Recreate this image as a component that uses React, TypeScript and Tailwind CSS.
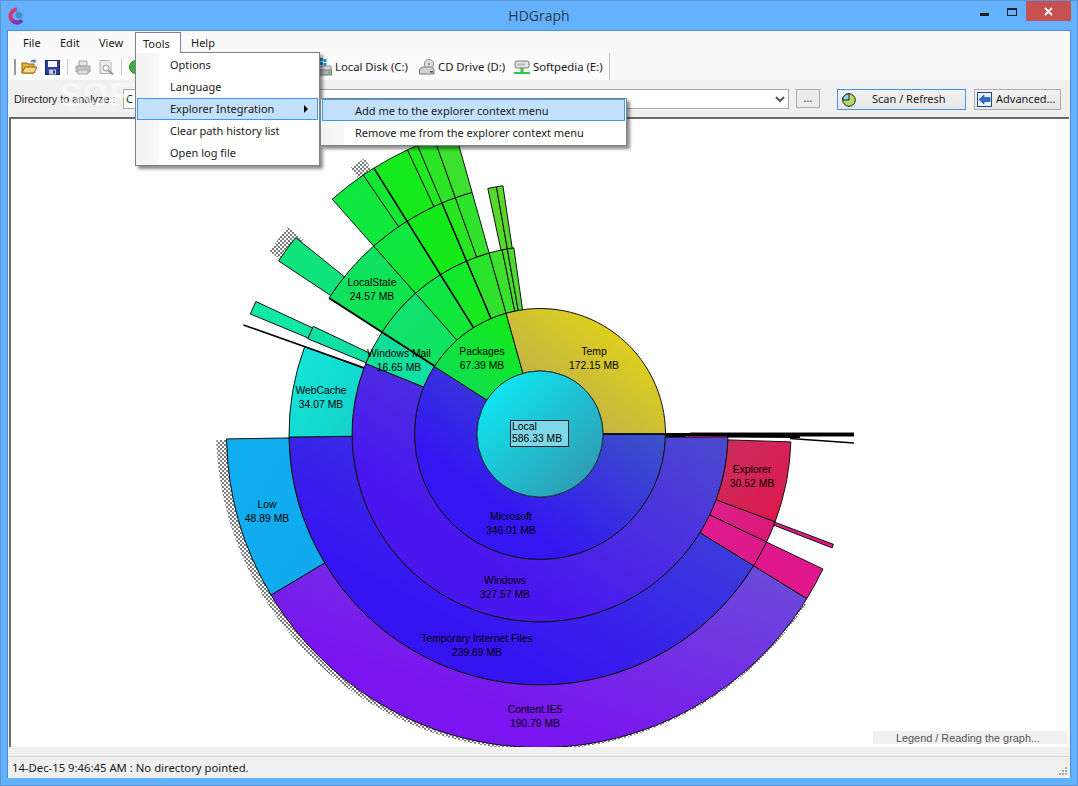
import React from "react";

const CX = 540;
const CY = 434;
const R = [63, 125.5, 188, 251, 313.5];

const pt = (r: number, a: number) => {
  const t = (a * Math.PI) / 180;
  return `${(CX + r * Math.cos(t)).toFixed(2)} ${(CY + r * Math.sin(t)).toFixed(2)}`;
};

const sector = (r0: number, r1: number, a0: number, a1: number) => {
  const big = a1 - a0 > 180 ? 1 : 0;
  return `M${pt(r0, a0)}L${pt(r1, a0)}A${r1} ${r1} 0 ${big} 1 ${pt(r1, a1)}L${pt(r0, a1)}A${r0} ${r0} 0 ${big} 0 ${pt(r0, a0)}Z`;
};

// ring index, start, end, colour a, colour b, rising = gradient runs bottom left to top right
type Seg = [number, number, number, string, string, boolean?];

const SEGS: Seg[] = [
  // microsoft / packages / temp
  [0, 0, 212.6, "#3316f2", "#3f68b8", true],
  [0, 212.6, 254.3, "#10dc60", "#12ea10", true],
  [0, 254.3, 360, "#b0a560", "#eedd06", true],
  // windows and co
  [1, 0, 202, "#4a16f0", "#4c58c6", true],
  [1, 202, 212.8, "#10de98", "#10e0a8"],
  [1, 212.8, 228.5, "#10e078", "#10e458"],
  [1, 228.5, 238, "#10e450", "#10e830"],
  [1, 238, 247, "#10e830", "#18ea18"],
  [1, 247, 254.3, "#20e828", "#38dc30"],
  [1, 254.3, 258.4, "#3ee030", "#3ee030"],
  [1, 258.4, 260, "#48dc30", "#48dc30"],
  [1, 260, 262, "#50da30", "#50da30"],
  // third ring
  [2, 1.8, 20.5, "#c8305e", "#e0154a"],
  [2, 20.5, 25.5, "#dc2090", "#d81a70"],
  [2, 25.5, 31.7, "#e01a90", "#dc1a88"],
  [2, 31.7, 179.3, "#3614f2", "#3e50d0", true],
  [2, 179.3, 200.4, "#14e8dc", "#14d0c8"],
  [2, 202.3, 205.4, "#10e0a8", "#10e0a0"],
  [2, 212.8, 228.5, "#10e070", "#10e440"],
  [2, 228.5, 238, "#10e44a", "#10ea28"],
  [2, 238, 247, "#12ea1c", "#16ea16"],
  [2, 247, 250.3, "#20e820", "#2ae620"],
  [2, 250.3, 254.3, "#2ae628", "#34e030"],
  [2, 258, 260, "#55d82a", "#55d82a"],
  [2, 260, 261.5, "#5ad62a", "#5ad62a"],
  // outer ring
  [3, 20.6, 21.3, "#dc1c80", "#dc1c80"],
  [3, 25.5, 31.7, "#e0188c", "#e0188c"],
  [3, 31.7, 149.1, "#7a14f0", "#6a4ed8", true],
  [3, 149.1, 179.1, "#10aef0", "#10aaee"],
  [3, 202.5, 205, "#10e8a4", "#10e8a4"],
  [3, 213.5, 218.8, "#10e47c", "#10e47c"],
  [3, 228.5, 235.7, "#10e844", "#12e838"],
  [3, 235.7, 238, "#12e834", "#12e834"],
  [3, 238, 245, "#14ea1e", "#16ea18"],
  [3, 245, 247, "#1eea1e", "#1eea1e"],
  [3, 247, 250.3, "#2ae626", "#2ae626"],
  [3, 250.3, 254.3, "#3ce02e", "#3ce02e"],
];

const SHADOWS: [number, number][] = [
  [33, 178],
  [213.5, 219],
  [234.5, 237.5],
];

const LABELS: [string, string, number, number][] = [
  ["Temp", "172.15 MB", 594, 355],
  ["Packages", "67.39 MB", 482, 355],
  ["Windows Mail", "16.65 MB", 399, 357],
  ["LocalState", "24.57 MB", 372, 286],
  ["WebCache", "34.07 MB", 321, 394],
  ["Low", "48.89 MB", 267, 508],
  ["Microsoft", "346.01 MB", 511, 520],
  ["Windows", "327.57 MB", 505, 584],
  ["Temporary Internet Files", "239.69 MB", 477, 642],
  ["Content.IE5", "190.79 MB", 535, 713],
  ["Explorer", "30.52 MB", 752, 473],
];

function Graph() {
  return (
    <svg viewBox="11 119 1058 628" className="block w-[1058px] h-[628px] font-['Liberation_Sans',sans-serif]">
      <defs>
        <pattern id="dither" width="4" height="4" patternUnits="userSpaceOnUse">
          <rect width="2" height="2" fill="#7c7c7c" />
          <rect x="2" y="2" width="2" height="2" fill="#7c7c7c" />
        </pattern>
        <linearGradient id="local" x1="0" y1="0" x2="1" y2="1">
          <stop offset="0" stopColor="#0af2fc" />
          <stop offset="1" stopColor="#3490a8" />
        </linearGradient>
        {SEGS.map((s, i) => (
          <linearGradient key={i} id={`g${i}`} x1="0" y1={s[5] ? 1 : 0} x2="1" y2={s[5] ? 0 : 1}>
            <stop offset="0" stopColor={s[3]} />
            {/* the big blue sectors keep their full colour for a while */}
            {s[2] - s[1] > 110 && <stop offset="0.3" stopColor={s[3]} />}
            <stop offset="1" stopColor={s[4]} />
          </linearGradient>
        ))}
      </defs>

      {SHADOWS.map(([a, b], i) => {
        const t0 = (a * Math.PI) / 180;
        const t1 = (b * Math.PI) / 180;
        const p = (r: number, t: number) => `${537 + r * Math.cos(t)} ${429 + r * Math.sin(t)}`;
        return (
          <path
            key={i}
            d={`M${p(300, t0)}L${p(321, t0)}A321 321 0 0 1 ${p(321, t1)}L${p(300, t1)}Z`}
            fill="url(#dither)"
          />
        );
      })}

      {SEGS.map((s, i) => (
        <path key={i} d={sector(R[s[0]], R[s[0] + 1], s[1], s[2])} fill={`url(#g${i})`} stroke="#111" strokeWidth="1" />
      ))}

      <path d={`M${pt(125.5, 212.8)}L${pt(251, 212.8)}`} stroke="#000" strokeWidth="2" />
      <path d={`M${pt(125.5, 238)}L${pt(313.5, 238)}`} stroke="#000" strokeWidth="1.6" />
      <path d={`M${pt(125.5, 247)}L${pt(251, 247)}`} stroke="#000" strokeWidth="1.4" />
      <path d={`M${pt(188, 200.6)}L${pt(316, 200.2)}`} stroke="#000" strokeWidth="1.6" />
      <path d="M603 434H665" stroke="#000" strokeWidth="1.5" />

      {/* tiny folders on the right, they collapse into a black band */}
      <path d="M690 432H854V433.5H690Z" fill="#8a8a8a" />
      <path d="M665 433H854V436.5H800V438L727 437.5L665 437.5Z" fill="#000" />
      <path d="M790 438.5L854 443" stroke="#000" strokeWidth="1.4" />
      <path d="M685 436.5L727 437" stroke="#a02050" strokeWidth="1" />

      <circle cx={CX} cy={CY} r={R[0]} fill="url(#local)" stroke="#1a3a44" strokeWidth="1" />
      <rect x="510.5" y="420.5" width="58" height="26" fill="#7fd8e8" stroke="#123" strokeWidth="1" />
      <g fontSize="11.5" fill="#000" transform="translate(512 0) scale(0.9 1)">
        <text x="0" y="430">Local</text>
        <text x="0" y="442">586.33 MB</text>
      </g>

      {LABELS.map(([a, b, x, y]) => (
        <g key={a} fontSize="11.5" fill="#000" textAnchor="middle" transform={`translate(${x} ${y}) scale(0.9 1)`}>
          <text>{a}</text>
          <text y="14">{b}</text>
        </g>
      ))}
    </svg>
  );
}

const Logo = () => (
  <svg width="18" height="18" viewBox="0 0 18 18">
    <circle cx="9" cy="9" r="6.5" fill="none" stroke="#d8327a" strokeWidth="4" strokeDasharray="22 41" transform="rotate(70 9 9)" />
    <circle cx="9" cy="9" r="6.5" fill="none" stroke="#7a3aa8" strokeWidth="4" strokeDasharray="10 41" transform="rotate(40 9 9)" />
    <circle cx="11" cy="8" r="3.6" fill="#3f8fc8" />
    <path d="M12 1.5L15 5L11 6Z" fill="#63b1ff" />
  </svg>
);

const FolderIcon = () => (
  <svg width="17" height="16" viewBox="0 0 17 16">
    <path d="M1 4h5l1 1h6v9H1z" fill="#e0b040" stroke="#8a6410" />
    <path d="M1 14l3-6h12l-3 6z" fill="#f8d878" stroke="#8a6410" />
    <path d="M10 3c1-2 3-2 4-1M14 0.5V3h-2.5" fill="none" stroke="#3a70b8" strokeWidth="1.2" />
  </svg>
);

const SaveIcon = () => (
  <svg width="15" height="15" viewBox="0 0 15 15">
    <rect x="0.5" y="0.5" width="14" height="14" fill="#2a3f9a" stroke="#1a2460" />
    <rect x="3" y="1" width="9" height="6" fill="#f4f4fa" />
    <rect x="4" y="9.5" width="7" height="5" fill="#c8cce0" />
    <rect x="8" y="10.5" width="2" height="3" fill="#2a3f9a" />
  </svg>
);

const PrintIcon = () => (
  <svg width="16" height="15" viewBox="0 0 16 15">
    <path d="M4 1h8v5H4z" fill="#e4e4e4" stroke="#a8a8a8" />
    <path d="M1 6h14v6H1z" fill="#c4c4c4" stroke="#a0a0a0" />
    <path d="M3 10h10v4H3z" fill="#dedede" stroke="#a8a8a8" />
  </svg>
);

const PreviewIcon = () => (
  <svg width="15" height="15" viewBox="0 0 15 15">
    <path d="M1 0.5h9l2 2v11H1z" fill="#ececec" stroke="#b0b0b0" />
    <circle cx="7" cy="8" r="3" fill="#f6f6f6" stroke="#9a9a9a" />
    <path d="M9.5 10.5L14 14.5" stroke="#9a9a9a" strokeWidth="2" />
  </svg>
);

const DiskIcon = () => (
  <svg width="14" height="18" viewBox="0 0 14 18">
    <rect x="2" y="0" width="3" height="3" fill="#1b96d8" />
    <rect x="5.5" y="1" width="3" height="3" fill="#1b96d8" />
    <rect x="2" y="4" width="3" height="3" fill="#1b96d8" />
    <rect x="5.5" y="5" width="3" height="3" fill="#1b96d8" />
    <path d="M0 11l3-3h10v5H0z" fill="#d8d8d8" stroke="#8a8a8a" />
    <rect x="0.5" y="12" width="13" height="5" fill="#b4b4b4" stroke="#7a7a7a" />
    <rect x="10" y="13.5" width="2" height="2" fill="#4ac83a" />
  </svg>
);

const CdIcon = () => (
  <svg width="16" height="16" viewBox="0 0 16 16">
    <circle cx="10" cy="5" r="4.6" fill="#dce2dc" stroke="#8a8a8a" />
    <circle cx="10" cy="5" r="1.2" fill="#6ab06a" />
    <path d="M0.5 10l3-2h9l2.5 2v5H0.5z" fill="#cfcfcf" stroke="#7a7a7a" />
    <rect x="11" y="12" width="3" height="1.6" fill="#5a5a5a" />
  </svg>
);

const NetIcon = () => (
  <svg width="16" height="15" viewBox="0 0 16 15">
    <rect x="1" y="1" width="14" height="7" rx="2" fill="#e2e2e2" stroke="#7a7a7a" />
    <rect x="3" y="3.5" width="8" height="2" fill="#b8b8b8" />
    <rect x="6.5" y="8" width="3" height="4" fill="#2ec84a" />
    <rect x="0" y="12" width="16" height="2" fill="#2ec84a" />
  </svg>
);

const PieIcon = () => (
  <svg width="14" height="14" viewBox="0 0 14 14">
    <circle cx="7" cy="7" r="6.3" fill="#b4d86a" stroke="#222" />
    <path d="M7 7V0.7A6.3 6.3 0 0 0 0.7 7Z" fill="#8ad8e0" stroke="#222" />
  </svg>
);

const AdvIcon = () => (
  <svg width="15" height="15" viewBox="0 0 15 15">
    <rect x="0.5" y="0.5" width="14" height="14" fill="#e8f0fa" stroke="#26457a" />
    <path d="M2 7.5L7 3v2.5h6v4H7V12z" fill="#2f6fd0" stroke="#173c80" strokeWidth="0.6" />
  </svg>
);

function Menus() {
  const row = "h-[22px] flex items-center pl-[34px]";
  return (
    <>
      <div className="absolute left-[127px] top-[21px] w-[185px] h-[114px] bg-white border border-[#7d8288] shadow-[3px_3px_3px_rgba(0,0,0,0.45)] pt-[1px] text-[#1a1a1a] bg-[linear-gradient(90deg,#f2f2f2_0,#f8f8f8_23px,#fff_24px)]">
        <div className={row}>Options</div>
        <div className={row}>Language</div>
        <div className="h-[22px] flex items-center justify-between pl-[32px] pr-[9px] mx-[1px] bg-[#c4e0ff] border border-[#3f98f0]">
          <span>Explorer Integration</span>
          <span className="w-0 h-0 border-y-[4px] border-y-transparent border-l-[4px] border-l-black" />
        </div>
        <div className={row}>Clear path history list</div>
        <div className={row}>Open log file</div>
      </div>
      <div className="absolute left-[312px] top-[67px] w-[307px] h-[48px] bg-white border border-[#7d8288] shadow-[3px_3px_3px_rgba(0,0,0,0.45)] text-[#1a1a1a] bg-[linear-gradient(90deg,#f2f2f2_0,#f8f8f8_23px,#fff_24px)]">
        <div className="h-[22px] flex items-center pl-[32px] pt-[2px] mx-[1px] bg-[#c4e0ff] border border-[#3f98f0]">Add me to the explorer context menu</div>
        <div className="h-[22px] flex items-center pl-[34px] pt-[2px]">Remove me from the explorer context menu</div>
      </div>
    </>
  );
}

export default function App() {
  return (
    <div className="w-[1078px] h-[786px] bg-[#63b1ff] border border-[#5b96d0] flex flex-col overflow-hidden font-['Noto_Sans',sans-serif] text-[11px] text-[#1a1a1a]">
      {/* title bar */}
      <div className="h-[29px] grid grid-cols-[1fr_auto_1fr] shrink-0">
        <div className="pl-[7px] pt-[6px]"><Logo /></div>
        <div className="text-[14px] leading-[30px] text-[#2c3a4e] font-['Open_Sans',sans-serif]">HDGraph</div>
        <div className="flex justify-end pr-[6px]">
          <div className="w-[9px] h-[3px] bg-[#1d1d1d] mt-[12px] mr-[18px]" />
          <div className="w-[10px] h-[8px] border border-t-2 border-[#1d1d1d] mt-[7px] mr-[9px]" />
          <div className="w-[45px] h-[20px] bg-[#c75050] text-white flex items-center justify-center">
            <svg width="9" height="9" viewBox="0 0 9 9"><path d="M1 1L8 8M8 1L1 8" stroke="#fff" strokeWidth="1.8" /></svg>
          </div>
        </div>
      </div>

      <div className="relative mx-[6px] w-[1064px] h-[748px] border border-[#4a90d8] border-b-0 bg-[#f0f0f0] flex flex-col">
        {/* menu bar */}
        <div className="h-[22px] bg-[#f9f9f9] flex pl-[7px] gap-[3px] shrink-0">
          <div className="w-[34px] pl-[8px] leading-[24px]">File</div>
          <div className="w-[36px] pl-[8px] leading-[24px]">Edit</div>
          <div className="w-[41px] pl-[8px] leading-[24px]">View</div>
          <div className="relative z-10 mt-[1px] w-[46px] h-[21px] pl-[7px] border border-b-0 border-[#7d8288] bg-white leading-[21px]">Tools</div>
          <div className="-ml-[1px] w-[40px] pl-[8px] leading-[24px]">Help</div>
        </div>

        {/* toolbar */}
        <div className="h-[27px] bg-[#f9f9f9] shrink-0">
          <div className="w-[602px] h-[27px] bg-[#fbfbfb] border-r border-[#c4c4c4] flex items-center pl-[6px] pt-[1px] text-[11.3px]">
            <div className="w-[2px] h-[16px] bg-[radial-gradient(#9a9a9a_1px,transparent_1px)] bg-[length:2px_4px] mr-[5px]" />
            <FolderIcon />
            <div className="w-[7px]" />
            <SaveIcon />
            <div className="w-[1px] h-[16px] bg-[#c8c8c8] mx-[7px]" />
            <PrintIcon />
            <div className="w-[8px]" />
            <PreviewIcon />
            <div className="w-[1px] h-[16px] bg-[#c8c8c8] mx-[7px]" />
            <div className="w-[14px] h-[14px] rounded-full bg-[#3cb03c] border border-[#2a7a2a]" />
            <div className="w-[175px]" />
            <DiskIcon />
            <span className="ml-[3px] w-[84px]">Local Disk (C:)</span>
            <CdIcon />
            <span className="ml-[3px] w-[76px]">CD Drive (D:)</span>
            <NetIcon />
            <span className="ml-[3px]">Softpedia (E:)</span>
          </div>
        </div>

        {/* directory row */}
        <div className="h-[37px] bg-[#f0f0f0] flex items-start pt-[9px] pl-[6px] shrink-0">
          <span className="w-[109px] leading-[20px] text-[10.8px] font-['Liberation_Sans',sans-serif]">Directory to analyze :</span>
          <div className="w-[666px] h-[20px] bg-white border border-[#a9a9a9] flex items-center justify-between pl-[2px] pr-[3px]">
            <span>C</span>
            <svg width="10" height="7" viewBox="0 0 10 7"><path d="M1 1L5 5L9 1" fill="none" stroke="#555" strokeWidth="2" /></svg>
          </div>
          <div className="ml-[7px] w-[24px] h-[19px] border border-[#adadad] bg-[#ececec] text-center leading-[16px] text-[#3a1a50]">...</div>
          <div className="ml-[17px] w-[129px] h-[21px] border border-[#3f98f0] bg-[linear-gradient(#f2f2f2,#e6e6e6)] flex items-center pl-[4px]">
            <PieIcon />
            <span className="ml-[16px]">Scan / Refresh</span>
          </div>
          <div className="ml-[8px] w-[87px] h-[21px] border border-[#adadad] bg-[linear-gradient(#f2f2f2,#e6e6e6)] flex items-center pl-[2px]">
            <AdvIcon />
            <span className="ml-[4px]">Advanced...</span>
          </div>
        </div>

        {/* graph */}
        <div className="relative ml-[1px] w-[1060px] h-[630px] bg-white border-t-2 border-l-2 border-[#6a6a6a] shrink-0 overflow-hidden">
          <Graph />
          <div className="absolute right-[2px] bottom-[3px] w-[194px] h-[13px] bg-[#f0f0f0] pr-[4px] text-center leading-[14px] text-[#555] text-[10.9px] font-['Liberation_Sans',sans-serif]">Legend / Reading the graph...</div>
        </div>

        {/* status bar */}
        <div className="h-[9px] shrink-0" />
        <div className="relative flex-1 border-t border-[#d7d7d7] pl-[4px] leading-[22px] text-[11.3px]">
          14-Dec-15 9:46:45 AM : No directory pointed.
          <svg width="11" height="11" viewBox="0 0 11 11" className="absolute right-[2px] bottom-[2px]">
            <path d="M8 1h2v2H8zM5 4h2v2H5zM8 4h2v2H8zM2 7h2v2H2zM5 7h2v2H5zM8 7h2v2H8z" fill="#a8a8a8" />
          </svg>
        </div>

        <div className="absolute left-[52px] top-[46px] text-[33px] leading-[36px] font-bold tracking-[1px] text-white/50 pointer-events-none font-['Liberation_Sans',sans-serif]">SOFTPEDIA</div>
        <Menus />
      </div>
    </div>
  );
}
